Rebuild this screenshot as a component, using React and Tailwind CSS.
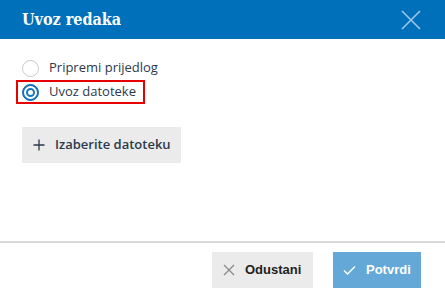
import React, { useState } from 'react';

const Radio = ({ checked, label, onClick }) => (
    <button onClick={onClick} className="flex items-center gap-[10px] h-6">
        {checked ? (
            <span className="w-[17px] h-[17px] rounded-full bg-[#1a78c2] border border-[#1565a8] flex items-center justify-center">
                <span className="w-[13px] h-[13px] rounded-full border-2 border-white flex items-center justify-center">
                    <span className="w-[5px] h-[5px] rounded-full bg-white"></span>
                </span>
            </span>
        ) : (
            <span className="w-[17px] h-[17px] rounded-full border border-[#c8c8c8] bg-white"></span>
        )}
        <span className="text-[13px] text-[#2c3a4b]">{label}</span>
    </button>
);

const App = () => {
    const [choice, setChoice] = useState(1);
    return (
        <div className="w-[445px] h-[296px] bg-white flex flex-col" style={{ fontFamily: '"Open Sans", sans-serif' }}>
            <div className="h-[39px] bg-[#0070bb] flex items-center justify-between pl-[22px] pr-[22px]">
                <h1 className="text-white text-[16px] font-bold" style={{ fontFamily: '"DejaVu Serif Condensed", "DejaVu Serif", serif' }}>Uvoz redaka</h1>
                <svg width="22" height="22" viewBox="0 0 22 22" className="mr-[1px]">
                    <path d="M2 2 L20 20 M20 2 L2 20" stroke="#9ec6e6" strokeWidth="1.6" fill="none" />
                </svg>
            </div>
            <div className="flex-1 flex flex-col px-[22px] pt-[17px]">
                <div className="flex flex-col gap-0">
                    <Radio checked={choice === 0} label="Pripremi prijedlog" onClick={() => setChoice(0)} />
                    <div className="-ml-[6px] w-[129px] h-6 border-2 border-[#e60000] pl-1 flex items-center">
                        <Radio checked={choice === 1} label="Uvoz datoteke" onClick={() => setChoice(1)} />
                    </div>
                </div>
                <button className="mt-[23px] w-[159px] h-9 bg-[#ebebeb] flex items-center gap-[10px] pl-[11px] text-[13px] font-semibold text-[#2c3a4b]">
                    <svg width="12" height="12" viewBox="0 0 12 12">
                        <path d="M6 0.5 V11.5 M0.5 6 H11.5" stroke="#2c3a4b" strokeWidth="1.3" />
                    </svg>
                    Izaberite datoteku
                </button>
            </div>
            <div className="h-[55px] border-t-2 border-[#d8d8d8] flex justify-end items-start pt-[9px] pr-[24px] gap-5" style={{ fontFamily: '"Liberation Sans", Arial, sans-serif' }}>
                <button className="w-[101px] h-9 bg-[#ebebeb] flex items-center gap-[10px] pl-[11px] text-[13px] font-bold text-[#222]">
                    <svg width="12" height="12" viewBox="0 0 12 12">
                        <path d="M1 1 L11 11 M11 1 L1 11" stroke="#8a8a8a" strokeWidth="1.3" />
                    </svg>
                    Odustani
                </button>
                <button className="w-[88px] h-9 bg-[#63a8d7] flex items-center gap-[10px] pl-[10px] text-[13px] font-bold text-white">
                    <svg width="13" height="10" viewBox="0 0 13 10">
                        <path d="M1 5.5 L4.5 9 L12 1.5" stroke="white" strokeWidth="1.4" fill="none" />
                    </svg>
                    Potvrdi
                </button>
            </div>
        </div>
    );
};

export default App;
